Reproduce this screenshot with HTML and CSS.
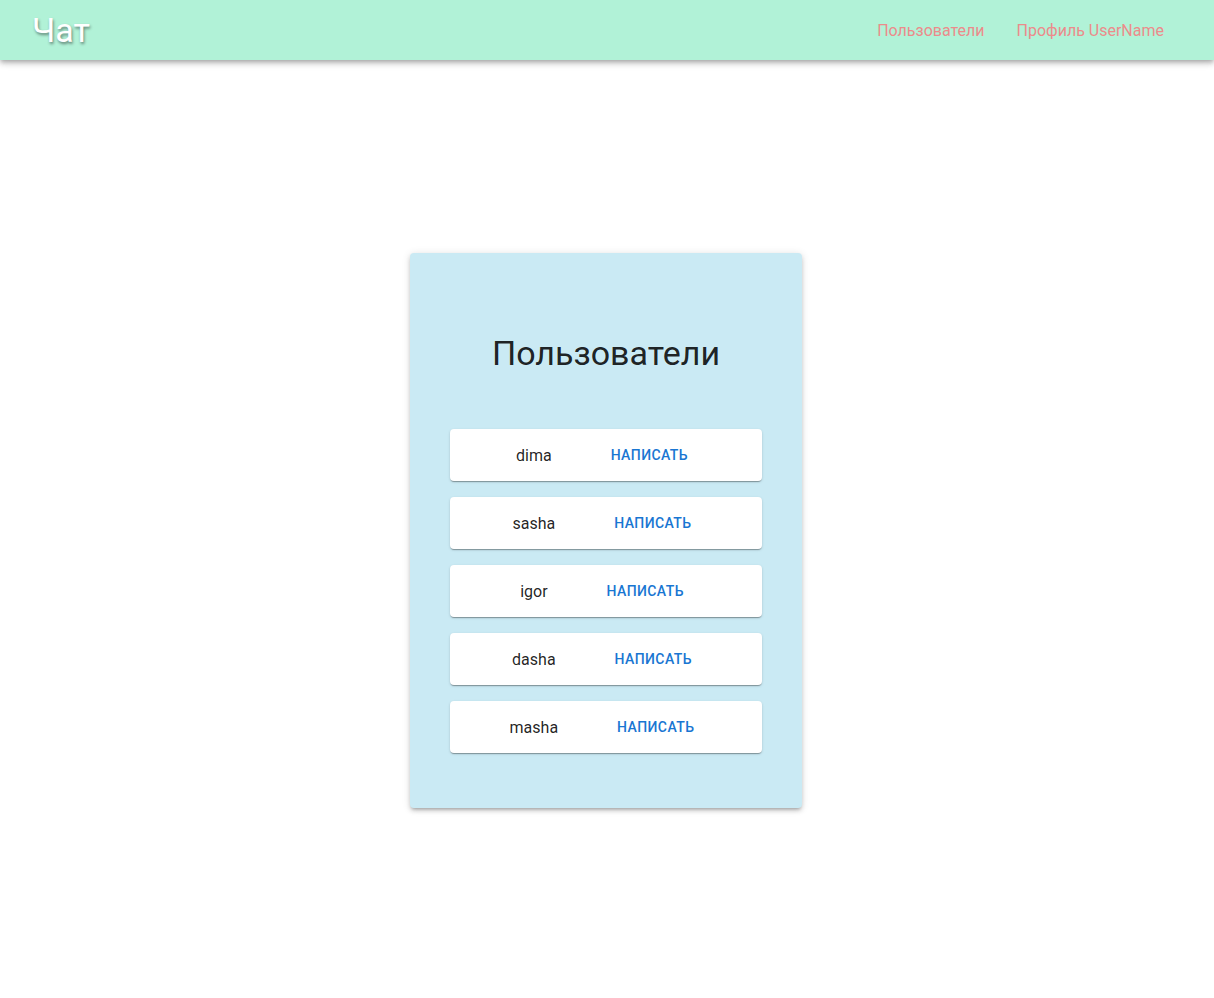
FILE: index.html
```html
<!DOCTYPE html>
<html lang="ru">
<head>
<meta charset="utf-8">
<title>Чат</title>
<link rel="stylesheet" href="styles.css">
</head>
<body>
<header class="appbar">
  <div class="logo">Чат</div>
  <nav class="nav">
    <a class="nav-link" href="#">Пользователи</a>
    <a class="nav-link" href="#">Профиль UserName</a>
  </nav>
</header>
<main class="main">
  <section class="card">
    <h1 class="title">Пользователи</h1>
    <ul class="users">
      <li class="user"><span class="user-name">dima</span><button class="write">Написать</button></li>
      <li class="user"><span class="user-name">sasha</span><button class="write">Написать</button></li>
      <li class="user"><span class="user-name">igor</span><button class="write">Написать</button></li>
      <li class="user"><span class="user-name">dasha</span><button class="write">Написать</button></li>
      <li class="user"><span class="user-name">masha</span><button class="write">Написать</button></li>
    </ul>
  </section>
</main>
</body>
</html>
```
FILE: styles.css
```css
* { box-sizing: border-box; }
html, body { margin: 0; padding: 0; }
body {
  font-family: Roboto, "Noto Sans", sans-serif;
  background: #fff;
  color: rgba(0,0,0,0.87);
}
.appbar {
  height: 60px;
  background: #b1f2d7;
  display: flex;
  align-items: center;
  justify-content: space-between;
  padding: 0 50px 0 32px;
  box-shadow: 0px 2px 4px -1px rgba(0,0,0,0.2), 0px 4px 5px 0px rgba(0,0,0,0.14), 0px 1px 10px 0px rgba(0,0,0,0.12);
  position: relative;
  z-index: 1;
}
.logo {
  font-size: 34px;
  color: #fff;
  text-shadow: 1px 2px 3px rgba(0,0,0,0.45);
  line-height: 1;
}
.nav { display: flex; gap: 32px; }
.nav-link {
  color: #ec8b8b;
  text-decoration: none;
  font-size: 16px;
}
.main {
  min-height: calc(100vh - 60px);
  display: flex;
  align-items: center;
  justify-content: center;
  padding: 3px 2px 0 0;
}
.card {
  width: 392px;
  background: #caeaf4;
  border-radius: 4px;
  padding: 78px 40px 55px;
  box-shadow: 0px 3px 3px -2px rgba(0,0,0,0.2), 0px 3px 4px 0px rgba(0,0,0,0.14), 0px 1px 8px 0px rgba(0,0,0,0.12);
}
.title {
  margin: 0 0 54px;
  font-size: 34px;
  font-weight: 400;
  line-height: 44px;
  text-align: center;
  color: rgba(0,0,0,0.87);
}
.users {
  list-style: none;
  margin: 0;
  padding: 0;
  display: flex;
  flex-direction: column;
  gap: 16px;
}
.user {
  height: 52px;
  background: #fff;
  border-radius: 4px;
  box-shadow: 0px 2px 1px -1px rgba(0,0,0,0.2), 0px 1px 1px 0px rgba(0,0,0,0.14), 0px 1px 3px 0px rgba(0,0,0,0.12);
  display: flex;
  align-items: center;
  justify-content: center;
  gap: 51px;
}
.user-name {
  font-size: 16px;
  color: rgba(0,0,0,0.87);
}
.write {
  font-family: inherit;
  border: 0;
  background: transparent;
  padding: 6px 8px;
  font-size: 14px;
  font-weight: 500;
  letter-spacing: 0.02857em;
  text-transform: uppercase;
  color: #1976d2;
  line-height: 1.75;
  cursor: pointer;
}
```
